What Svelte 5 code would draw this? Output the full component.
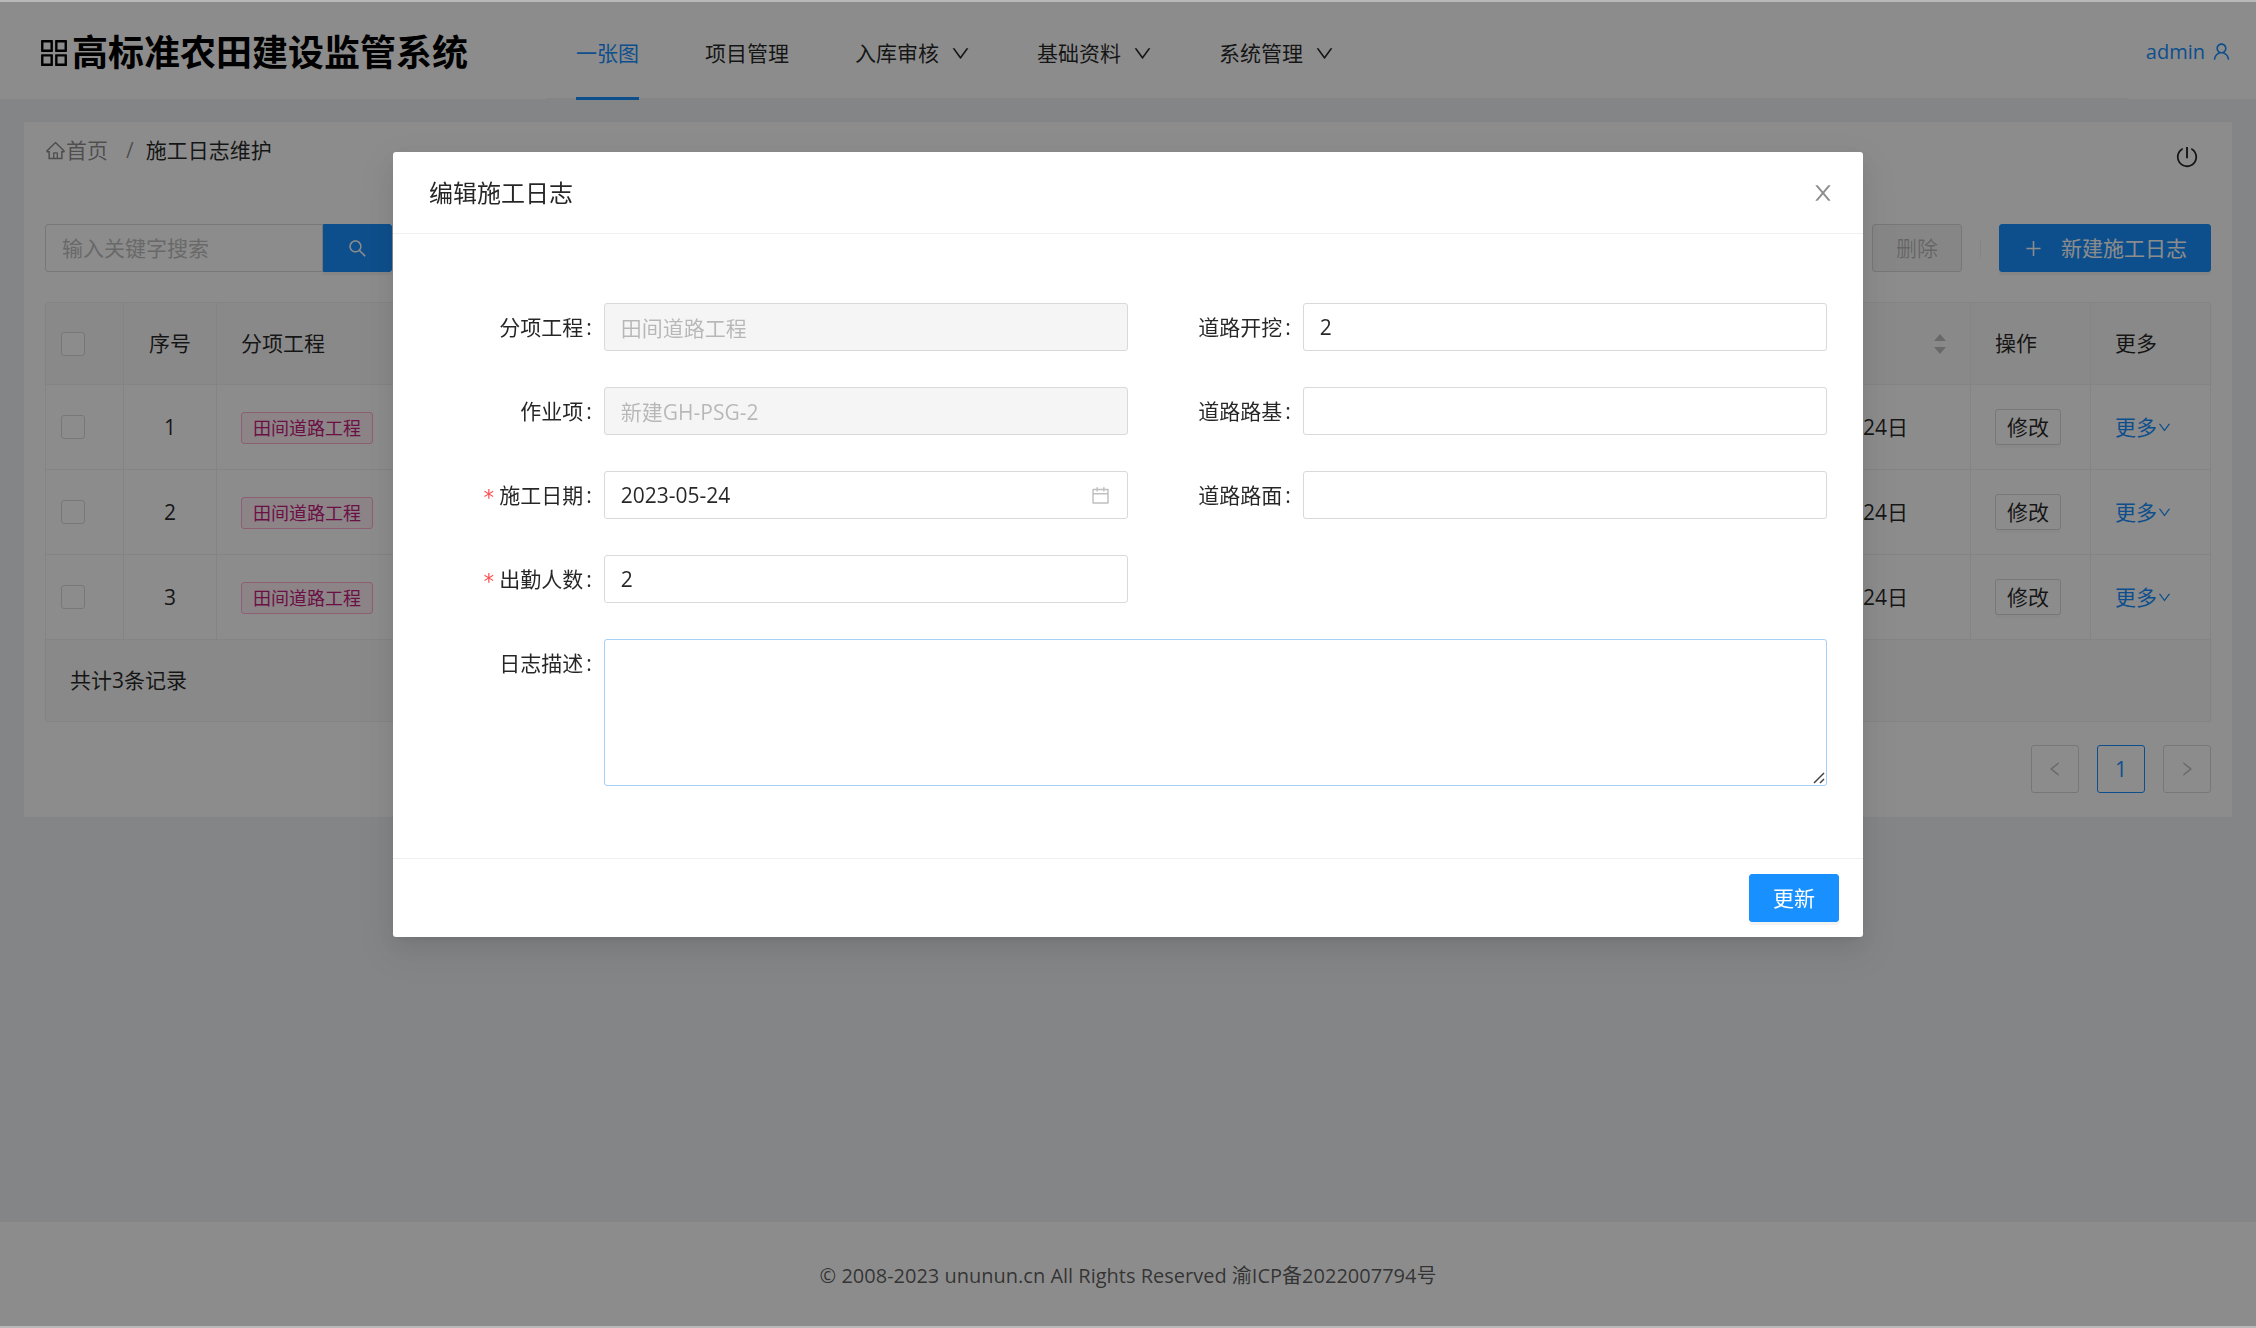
<script module lang="ts">
	export interface MenuItem {
		label: string;
		active?: boolean;
		hasChildren?: boolean;
	}

	export interface LogRecord {
		id: number;
		project: string;
		date: string;
	}
</script>

<script lang="ts">
	const menu: MenuItem[] = [
		{ label: '一张图', active: true },
		{ label: '项目管理' },
		{ label: '入库审核', hasChildren: true },
		{ label: '基础资料', hasChildren: true },
		{ label: '系统管理', hasChildren: true }
	];

	const records: LogRecord[] = [
		{ id: 1, project: '田间道路工程', date: '2023年05月24日' },
		{ id: 2, project: '田间道路工程', date: '2023年05月24日' },
		{ id: 3, project: '田间道路工程', date: '2023年05月24日' }
	];

	const icons = {
		app: 'M464 144H160c-8.8 0-16 7.2-16 16v304c0 8.8 7.2 16 16 16h304c8.8 0 16-7.2 16-16V160c0-8.8-7.2-16-16-16zm-52 268H212V212h200v200zm452-268H560c-8.8 0-16 7.2-16 16v304c0 8.8 7.2 16 16 16h304c8.8 0 16-7.2 16-16V160c0-8.8-7.2-16-16-16zm-52 268H612V212h200v200zM464 544H160c-8.8 0-16 7.2-16 16v304c0 8.8 7.2 16 16 16h304c8.8 0 16-7.2 16-16V560c0-8.8-7.2-16-16-16zm-52 268H212V612h200v200zm452-268H560c-8.8 0-16 7.2-16 16v304c0 8.8 7.2 16 16 16h304c8.8 0 16-7.2 16-16V560c0-8.8-7.2-16-16-16zm-52 268H612V612h200v200z',
		home: 'M946.5 505L560.1 118.8l-25.9-25.9a31.5 31.5 0 00-44.4 0L77.5 505a63.9 63.9 0 00-18.8 46c.4 35.2 29.7 63.3 64.9 63.3h42.5V940h691.8V614.3h43.4c17.1 0 33.2-6.7 45.3-18.8a63.6 63.6 0 0018.7-45.3c0-17-6.7-33.1-18.8-45.2zM568 868H456V664h112v204zm217.9-325.7V868H632V640c0-22.1-17.9-40-40-40H432c-22.1 0-40 17.9-40 40v228H238.1V542.3h-96l370-369.7 23.1 23.1L882 542.3h-96.1z',
		user: 'M858.5 763.6a374 374 0 00-80.6-119.5 375.63 375.63 0 00-119.5-80.6c-.4-.2-.8-.3-1.2-.5C719.5 518 760 444.7 760 362c0-137-111-248-248-248S264 225 264 362c0 82.7 40.5 156 102.8 201.1-.4.2-.8.3-1.2.5-44.8 18.9-85 46-119.5 80.6a375.63 375.63 0 00-80.6 119.5A371.7 371.7 0 00136 901.8a8 8 0 008 8.2h60c4.4 0 7.9-3.5 8-7.8 2-77.2 33-149.5 87.8-204.3 56.7-56.7 132-87.9 212.2-87.9s155.5 31.2 212.2 87.9C779 752.7 810 825 812 902.2c.1 4.4 3.6 7.8 8 7.8h60a8 8 0 008-8.2c-1-47.8-10.9-94.3-29.5-138.2zM512 534c-45.9 0-89.1-17.9-121.6-50.4S340 407.9 340 362c0-45.9 17.9-89.1 50.4-121.6S466.1 190 512 190s89.1 17.9 121.6 50.4S684 316.1 684 362c0 45.9-17.9 89.1-50.4 121.6S557.9 534 512 534z',
		power: 'M705.6 124.9a8 8 0 00-11.6 7.2v64.2c0 5.5 2.9 10.6 7.5 13.6a352.2 352.2 0 0162.2 49.8c32.7 32.8 58.4 70.9 76.3 113.3a355 355 0 0127.9 138.7c0 48.1-9.4 94.8-27.9 138.7a355.92 355.92 0 01-76.3 113.3 353.06 353.06 0 01-113.2 76.4c-43.8 18.6-90.5 28-138.5 28s-94.7-9.4-138.5-28a353.06 353.06 0 01-113.2-76.4A355.92 355.92 0 01184 650.4a355 355 0 01-27.9-138.7c0-48.1 9.4-94.8 27.9-138.7 17.9-42.4 43.6-80.5 76.3-113.3 19-19 39.8-35.6 62.2-49.8 4.7-2.9 7.5-8.1 7.5-13.6V132c0-6-6.3-9.8-11.6-7.2C178.5 195.2 82 339.3 80 506.3 77.2 745.1 272.5 943.5 511.2 944c239 .5 432.8-193.3 432.8-432.4 0-169.2-97-315.7-238.4-386.7zM480 560h64c4.4 0 8-3.6 8-8V88c0-4.4-3.6-8-8-8h-64c-4.4 0-8 3.6-8 8v464c0 4.4 3.6 8 8 8z',
		search: 'M909.6 854.5L649.9 594.8C690.2 542.7 712 479 712 412c0-80.2-31.3-155.4-87.9-212.1-56.6-56.7-132-87.9-212.1-87.9s-155.5 31.3-212.1 87.9C143.2 256.5 112 331.8 112 412c0 80.1 31.3 155.5 87.9 212.1C256.5 680.8 331.8 712 412 712c67 0 130.6-21.8 182.7-62l259.7 259.6a8.2 8.2 0 0011.6 0l43.6-43.5a8.2 8.2 0 000-11.6zM570.4 570.4C528 612.7 471.8 636 412 636s-116-23.3-158.4-65.6C211.3 528 188 471.8 188 412s23.3-116.1 65.6-158.4C296 211.3 352.2 188 412 188s116.1 23.2 158.4 65.6S636 352.2 636 412s-23.3 116.1-65.6 158.4z',
		plus: 'M482 152h60q8 0 8 8v314h298q8 0 8 8v60q0 8-8 8H550v314q0 8-8 8h-60q-8 0-8-8V550H176q-8 0-8-8v-60q0-8 8-8h298V160q0-8 8-8z',
		calendar: 'M880 184H712v-64c0-4.4-3.6-8-8-8h-56c-4.4 0-8 3.6-8 8v64H384v-64c0-4.4-3.6-8-8-8h-56c-4.4 0-8 3.6-8 8v64H144c-17.7 0-32 14.3-32 32v664c0 17.7 14.3 32 32 32h736c17.7 0 32-14.3 32-32V216c0-17.7-14.3-32-32-32zm-40 656H184V460h656v380zM184 392V256h128v48c0 4.4 3.6 8 8 8h56c4.4 0 8-3.6 8-8v-48h256v48c0 4.4 3.6 8 8 8h56c4.4 0 8-3.6 8-8v-48h128v136H184z',
		close: 'M563.8 512l262.5-312.9c4.4-5.2.7-13.1-6.1-13.1h-79.8c-4.7 0-9.2 2.1-12.3 5.7L511.6 449.8 295.1 191.7c-3-3.6-7.5-5.7-12.3-5.7H203c-6.8 0-10.5 7.9-6.1 13.1L459.4 512 196.9 824.9A7.95 7.95 0 00203 838h79.8c4.7 0 9.2-2.1 12.3-5.7l216.5-258.1 216.5 258.1c3 3.6 7.5 5.7 12.3 5.7h79.8c6.8 0 10.5-7.9 6.1-13.1L563.8 512z',
		down: 'M884 256h-75c-5.1 0-9.9 2.5-12.9 6.6L512 654.2 227.9 262.6c-3-4.1-7.8-6.6-12.9-6.6h-75c-6.5 0-10.3 7.4-6.5 12.7l352.6 486.1c12.8 17.6 39 17.6 51.7 0l352.6-486.1c3.9-5.3.1-12.7-6.4-12.7z',
		left: 'M724 218.3V141c0-6.7-7.7-10.4-12.9-6.3L260.3 486.8a31.86 31.86 0 000 50.3l450.8 352.1c5.3 4.1 12.9.4 12.9-6.3v-77.3c0-4.9-2.3-9.6-6.1-12.6l-360-281 360-281.1c3.8-3 6.1-7.7 6.1-12.6z',
		right: 'M765.7 486.8L314.9 134.7A7.97 7.97 0 00302 141v77.3c0 4.9 2.3 9.6 6.1 12.6l360 281.1-360 281.1c-3.9 3-6.1 7.7-6.1 12.6V883c0 6.7 7.7 10.4 12.9 6.3l450.8-352.1a31.96 31.96 0 000-50.4z'
	};

	let form = $state({
		project: '田间道路工程',
		task: '新建GH-PSG-2',
		date: '2023-05-24',
		workers: '2',
		excavation: '2',
		roadbed: '',
		surface: '',
		description: ''
	});

	let keyword = $state('');
	let open = $state(true);

	function handleClose(): void {
		open = false;
	}

	function handleSubmit(event: Event): void {
		event.preventDefault();
		handleClose();
	}
</script>

{#snippet icon(name: keyof typeof icons, size = 21)}
	<svg class="icon" width={size} height={size} viewBox="0 0 1024 1024" aria-hidden="true">
		<path d={icons[name]} />
	</svg>
{/snippet}

<div class="page">
	<header class="header">
		<h1 class="brand">{@render icon('app', 36)}高标准农田建设监管系统</h1>
		<nav class="menu">
			{#each menu as item (item.label)}
				<a class="menu-item" class:active={item.active} href="#menu">
					{item.label}
					{#if item.hasChildren}{@render icon('down')}{/if}
				</a>
			{/each}
		</nav>
		<a class="user" href="#user">admin {@render icon('user')}</a>
	</header>

	<main class="main">
		<section class="card">
			<div class="card-head">
				<nav class="breadcrumb">
					<a href="#home">{@render icon('home')}首页</a>
					<span class="separator">/</span>
					<span class="current">施工日志维护</span>
				</nav>
				<button class="power" aria-label="退出">{@render icon('power', 24)}</button>
			</div>

			<div class="toolbar">
				<div class="search">
					<input class="control" bind:value={keyword} placeholder="输入关键字搜索" aria-label="输入关键字搜索" />
					<button class="btn primary" aria-label="搜索">{@render icon('search')}</button>
				</div>
				<div class="actions">
					<button class="btn" disabled>删除</button>
					<span class="divider"></span>
					<button class="btn primary">{@render icon('plus')}新建施工日志</button>
				</div>
			</div>

			<table class="table">
				<colgroup>
					<col class="col-check" />
					<col class="col-index" />
					<col />
					<col class="col-date" />
					<col class="col-action" />
					<col class="col-action" />
				</colgroup>
				<thead>
					<tr>
						<th class="check"><input type="checkbox" aria-label="全选" /></th>
						<th class="index">序号</th>
						<th>分项工程</th>
						<th>
							<div class="sortable">
								施工日期
								<svg width="12" height="20" viewBox="0 0 12 20" aria-hidden="true">
									<path d="M6 0l6 7H0zM0 13h12l-6 7z" />
								</svg>
							</div>
						</th>
						<th>操作</th>
						<th>更多</th>
					</tr>
				</thead>
				<tbody>
					{#each records as record (record.id)}
						<tr>
							<td class="check"><input type="checkbox" aria-label="选择第{record.id}行" /></td>
							<td class="index">{record.id}</td>
							<td><span class="tag">{record.project}</span></td>
							<td>{record.date}</td>
							<td><button class="btn small">修改</button></td>
							<td><a class="more" href="#more">更多{@render icon('down', 15)}</a></td>
						</tr>
					{/each}
				</tbody>
				<tfoot>
					<tr>
						<td colspan="6">共计{records.length}条记录</td>
					</tr>
				</tfoot>
			</table>

			<div class="pagination">
				<button disabled aria-label="上一页">{@render icon('left', 18)}</button>
				<button class="active">1</button>
				<button disabled aria-label="下一页">{@render icon('right', 18)}</button>
			</div>
		</section>
	</main>

	<footer class="footer">© 2008-2023 ununun.cn All Rights Reserved 渝ICP备2022007794号</footer>
</div>

{#if open}
	<div class="mask"></div>
	<div class="modal-wrap">
		<form class="modal" role="dialog" aria-labelledby="modal-title" onsubmit={handleSubmit}>
			<div class="modal-header">
				<h2 id="modal-title">编辑施工日志</h2>
				<button type="button" class="close" aria-label="关闭" onclick={handleClose}>
					{@render icon('close', 24)}
				</button>
			</div>

			<div class="modal-body">
				<div class="column">
					<div class="field">
						<label for="project">分项工程</label>
						<input class="control" id="project" bind:value={form.project} disabled />
					</div>
					<div class="field">
						<label for="task">作业项</label>
						<input class="control" id="task" bind:value={form.task} disabled />
					</div>
					<div class="field">
						<label class="required" for="date">施工日期</label>
						<div class="control picker">
							<input id="date" bind:value={form.date} />
							{@render icon('calendar')}
						</div>
					</div>
					<div class="field">
						<label class="required" for="workers">出勤人数</label>
						<input class="control" id="workers" bind:value={form.workers} />
					</div>
				</div>
				<div class="column">
					<div class="field">
						<label for="excavation">道路开挖</label>
						<input class="control" id="excavation" bind:value={form.excavation} />
					</div>
					<div class="field">
						<label for="roadbed">道路路基</label>
						<input class="control" id="roadbed" bind:value={form.roadbed} />
					</div>
					<div class="field">
						<label for="surface">道路路面</label>
						<input class="control" id="surface" bind:value={form.surface} />
					</div>
				</div>
				<div class="field wide">
					<label for="description">日志描述</label>
					<div class="textarea">
						<textarea class="control" id="description" bind:value={form.description}></textarea>
						<svg class="grip" width="12" height="12" viewBox="0 0 12 12" aria-hidden="true">
							<path d="M1 11L11 1M7 11l4-4" />
						</svg>
					</div>
				</div>
			</div>

			<div class="modal-footer">
				<button class="btn primary" type="submit">更新</button>
			</div>
		</form>
	</div>
{/if}

<style>
	:global(body) {
		background: #f0f2f5;
		color: rgba(0, 0, 0, 0.85);
		font-family: 'Open Sans', 'Noto Sans CJK SC', sans-serif;
		font-size: 21px;
		line-height: 33px;
	}

	* {
		box-sizing: border-box;
	}

	a {
		color: #1890ff;
		text-decoration: none;
	}

	button,
	input,
	textarea {
		font: inherit;
		color: inherit;
		margin: 0;
	}

	button {
		cursor: pointer;
	}

	.icon {
		display: block;
		flex-shrink: 0;
		fill: currentColor;
	}

	.page {
		min-height: 100vh;
		display: flex;
		flex-direction: column;
	}

	.header {
		height: 99px;
		display: flex;
		padding: 0 24px 0 36px;
		background: #fff;
	}

	.brand {
		width: 510px;
		margin: 0;
		display: flex;
		align-items: center;
		padding-top: 6px;
		font-size: 36px;
		font-weight: 700;
		color: #000;
	}

	.menu {
		flex: 1;
		display: flex;
		gap: 66px;
		padding: 0 30px;
		border-bottom: 1px solid #f0f0f0;
	}

	.menu-item {
		display: flex;
		align-items: center;
		gap: 11px;
		padding-top: 9px;
		margin-bottom: -2px;
		border-bottom: 3px solid transparent;
		color: rgba(0, 0, 0, 0.85);
	}

	.menu-item.active {
		color: #1890ff;
		border-color: #1890ff;
	}

	.user {
		width: 103px;
		display: flex;
		align-items: center;
		justify-content: flex-end;
		gap: 6px;
		padding-top: 4px;
		font-size: 20px;
	}

	.main {
		flex: 1;
		padding: 23px 24px;
	}

	.card {
		padding: 0 21px 24px;
		background: #fff;
	}

	.card-head {
		height: 102px;
		display: flex;
		justify-content: space-between;
		align-items: flex-start;
		padding: 12px 12px 0 0;
	}

	.breadcrumb {
		display: flex;
	}

	.breadcrumb a {
		display: flex;
		align-items: center;
		color: rgba(0, 0, 0, 0.45);
	}

	.separator {
		margin: 0 12px 0 18px;
		color: rgba(0, 0, 0, 0.45);
	}

	.power {
		padding: 11px 0 0;
		border: none;
		background: none;
	}

	.toolbar,
	.actions,
	.search {
		display: flex;
		align-items: center;
	}

	.toolbar {
		justify-content: space-between;
		margin-bottom: 30px;
	}

	.actions {
		gap: 18px;
	}

	.search .control {
		width: 278px;
		border-radius: 3px 0 0 3px;
	}

	.search .btn {
		border-radius: 0 3px 3px 0;
	}

	.divider {
		width: 1px;
		height: 19px;
		background: #f0f0f0;
	}

	.control {
		width: 100%;
		height: 48px;
		padding: 0 16px;
		border: 1px solid #d9d9d9;
		border-radius: 3px;
		background: #fff;
		outline: none;
	}

	.control::placeholder {
		color: #bfbfbf;
	}

	.control:disabled {
		background: #f5f5f5;
		color: rgba(0, 0, 0, 0.25);
	}

	.btn {
		height: 48px;
		display: flex;
		align-items: center;
		gap: 17px;
		padding: 0 23px;
		border: 1px solid #d9d9d9;
		border-radius: 3px;
		background: #fff;
		box-shadow: 0 3px 0 rgba(0, 0, 0, 0.02);
	}

	.btn:disabled {
		background: #f5f5f5;
		color: rgba(0, 0, 0, 0.25);
		box-shadow: none;
	}

	.btn.primary {
		border-color: #1890ff;
		background: #1890ff;
		color: #fff;
		box-shadow: 0 3px 0 rgba(0, 0, 0, 0.05);
	}

	.btn.small {
		height: 36px;
		padding: 0 11px;
	}

	.table {
		width: 100%;
		table-layout: fixed;
		border: 1px solid #f0f0f0;
		border-right: none;
		border-bottom: none;
		border-radius: 3px;
		border-spacing: 0;
	}

	.col-check {
		width: 78px;
	}

	.col-index {
		width: 93px;
	}

	.col-date {
		width: 246px;
	}

	.col-action {
		width: 120px;
	}

	th,
	td {
		height: 85px;
		padding: 0 24px;
		border-right: 1px solid #f0f0f0;
		border-bottom: 1px solid #f0f0f0;
		font-weight: 400;
		text-align: left;
	}

	th,
	tfoot td {
		height: 82px;
		background: #fafafa;
	}

	.check {
		padding: 0 15px;
	}

	.index {
		text-align: center;
	}

	input[type='checkbox'] {
		appearance: none;
		display: block;
		width: 24px;
		height: 24px;
		border: 1px solid #d9d9d9;
		border-radius: 3px;
		background: #fff;
	}

	.sortable {
		display: flex;
		align-items: center;
		justify-content: space-between;
	}

	.sortable svg {
		fill: #bfbfbf;
	}

	.tag {
		display: inline-block;
		padding: 0 11px;
		border: 1px solid #ffadd2;
		border-radius: 3px;
		background: #fff0f6;
		color: #c41d7f;
		font-size: 18px;
		line-height: 30px;
		vertical-align: middle;
	}

	.more {
		display: flex;
		align-items: center;
	}

	.pagination {
		display: flex;
		justify-content: flex-end;
		gap: 18px;
		margin-top: 23px;
	}

	.pagination button {
		width: 48px;
		height: 48px;
		display: flex;
		align-items: center;
		justify-content: center;
		padding: 0;
		border: 1px solid #d9d9d9;
		border-radius: 3px;
		background: #fff;
		color: rgba(0, 0, 0, 0.25);
	}

	.pagination .active {
		border-color: #1890ff;
		color: #1890ff;
		font-weight: 500;
	}

	.footer {
		padding: 37px 24px 36px;
		background: #fff;
		color: rgba(0, 0, 0, 0.65);
		font-size: 20px;
		text-align: center;
	}

	.mask,
	.modal-wrap {
		position: fixed;
		inset: 0;
	}

	.mask {
		border-top: 2px solid #b9b9b9;
		border-bottom: 2px solid #b9b9b9;
		background: rgba(0, 0, 0, 0.45);
	}

	.modal-wrap {
		overflow: auto;
		padding: 152px 24px 36px;
	}

	.modal {
		max-width: 1470px;
		margin: 0 auto;
		border-radius: 3px;
		background: #fff;
		box-shadow:
			0 5px 9px -6px rgba(0, 0, 0, 0.12),
			0 9px 24px 0 rgba(0, 0, 0, 0.08),
			0 14px 42px 12px rgba(0, 0, 0, 0.05);
	}

	.modal-header {
		height: 82px;
		display: flex;
		align-items: center;
		justify-content: space-between;
		padding: 0 28px 0 36px;
		border-bottom: 1px solid #f0f0f0;
	}

	.modal-header h2 {
		margin: 0;
		font-size: 24px;
		font-weight: 400;
	}

	.close {
		padding: 0;
		border: none;
		background: none;
		color: rgba(0, 0, 0, 0.45);
	}

	.modal-body {
		display: grid;
		grid-template-columns: 1fr 1fr;
		padding: 69px 36px 36px;
	}

	.field {
		display: grid;
		grid-template-columns: 1fr 3fr;
		align-items: start;
		margin-bottom: 36px;
	}

	.field.wide {
		grid-column: 1 / -1;
		grid-template-columns: 1fr 7fr;
	}

	label {
		height: 48px;
		display: flex;
		align-items: center;
		justify-content: flex-end;
		white-space: nowrap;
	}

	label::after {
		content: ':';
		margin: 0 12px 0 3px;
	}

	.required::before {
		content: '*';
		margin: 6px 4px 0 0;
		color: #ff4d4f;
		font-family: 'DejaVu Sans Mono', monospace;
	}

	.picker {
		display: flex;
		align-items: center;
	}

	.picker input {
		flex: 1;
		min-width: 0;
		padding: 0;
		border: none;
		background: none;
		outline: none;
	}

	.picker .icon {
		fill: rgba(0, 0, 0, 0.25);
	}

	.textarea {
		position: relative;
	}

	textarea.control {
		display: block;
		height: 147px;
		padding: 6px 16px;
		border-color: #a6d0f5;
		resize: none;
	}

	.grip {
		position: absolute;
		right: 2px;
		bottom: 2px;
		fill: none;
		stroke: #444;
		stroke-width: 1.5;
	}

	.modal-footer {
		display: flex;
		justify-content: flex-end;
		padding: 15px 24px;
		border-top: 1px solid #f0f0f0;
	}
</style>
